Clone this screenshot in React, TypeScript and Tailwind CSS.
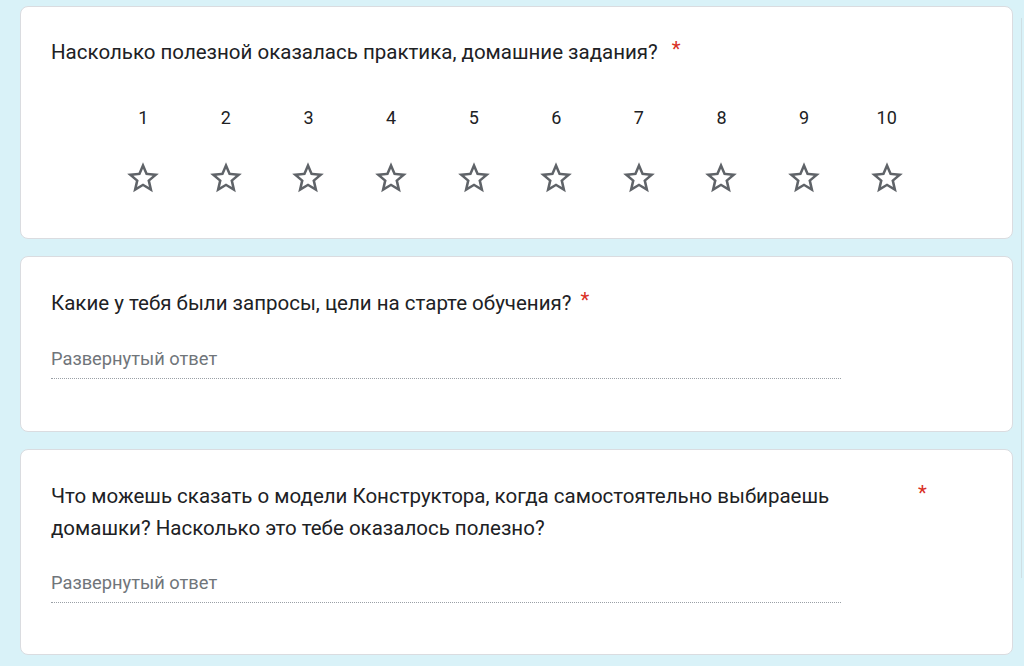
const StarIcon = () => (
  <svg width="38" height="38" viewBox="0 0 24 24" fill="#5f6368">
    <path d="M22 9.24l-7.19-.62L12 2 9.19 8.63 2 9.24l5.46 4.73L5.82 21 12 17.27 18.18 21l-1.63-7.03L22 9.24zM12 15.4l-3.76 2.27 1-4.28-3.32-2.88 4.38-.38L12 6.1l1.71 4.04 4.38.38-3.32 2.88 1 4.28L12 15.4z" />
  </svg>
);

const Title = ({ text, wide, gap }: { text: string; wide?: boolean; gap: string }) => (
  <div className="flex items-start text-[20.5px] leading-[32px] text-[#202124]">
    <span className={wide ? "w-[862px] shrink-0" : ""}>{text}</span>
    <span className={`${gap} text-[#d93025] leading-[26px]`}>*</span>
  </div>
);

const LongAnswer = () => (
  <div className="w-[790px] border-b border-dotted border-[#9aa0a6] pb-[7px] text-[18.3px] leading-[24px] text-[#70757a]">
    Развернутый ответ
  </div>
);

export default function App() {
  const scale = [1, 2, 3, 4, 5, 6, 7, 8, 9, 10];

  return (
    <div
      className="flex h-[666px] w-full overflow-hidden bg-[#d9f2f8]"
      style={{ fontFamily: "Roboto, 'Noto Sans', sans-serif" }}
    >
      <div className="ml-[20px] flex w-[993px] shrink-0 flex-col gap-[17px] pt-[6px]">
        <div className="rounded-[8px] border border-[#dadce0] bg-white pl-[30px] pr-[31px] pt-[29px] pb-[41px]">
          <Title text="Насколько полезной оказалась практика, домашние задания?" gap="ml-[14px]" />
          <div className="ml-[51px] mt-[38px] grid w-[826px] grid-cols-10">
            {scale.map((n) => (
              <div key={n} className="flex flex-col items-center">
                <span className="text-[18px] leading-[24px] text-[#202124]">{n}</span>
                <div className="mt-[29px]">
                  <StarIcon />
                </div>
              </div>
            ))}
          </div>
        </div>

        <div className="rounded-[8px] border border-[#dadce0] bg-white pl-[30px] pr-[31px] pt-[30px] pb-[52px]">
          <Title text="Какие у тебя были запросы, цели на старте обучения?" gap="ml-[9px]" />
          <div className="mt-[28px]">
            <LongAnswer />
          </div>
        </div>

        <div className="rounded-[8px] border border-[#dadce0] bg-white pl-[30px] pr-[31px] pt-[30px] pb-[51px]">
          <Title
            text="Что можешь сказать о модели Конструктора, когда самостоятельно выбираешь домашки? Насколько это тебе оказалось полезно?"
            wide
            gap="ml-[5px]"
          />
          <div className="mt-[27px]">
            <LongAnswer />
          </div>
        </div>
      </div>
      <div className="ml-[8px] mt-[18px] h-[560px] w-[1px] bg-[#cfdfe4]" />
    </div>
  );
}
